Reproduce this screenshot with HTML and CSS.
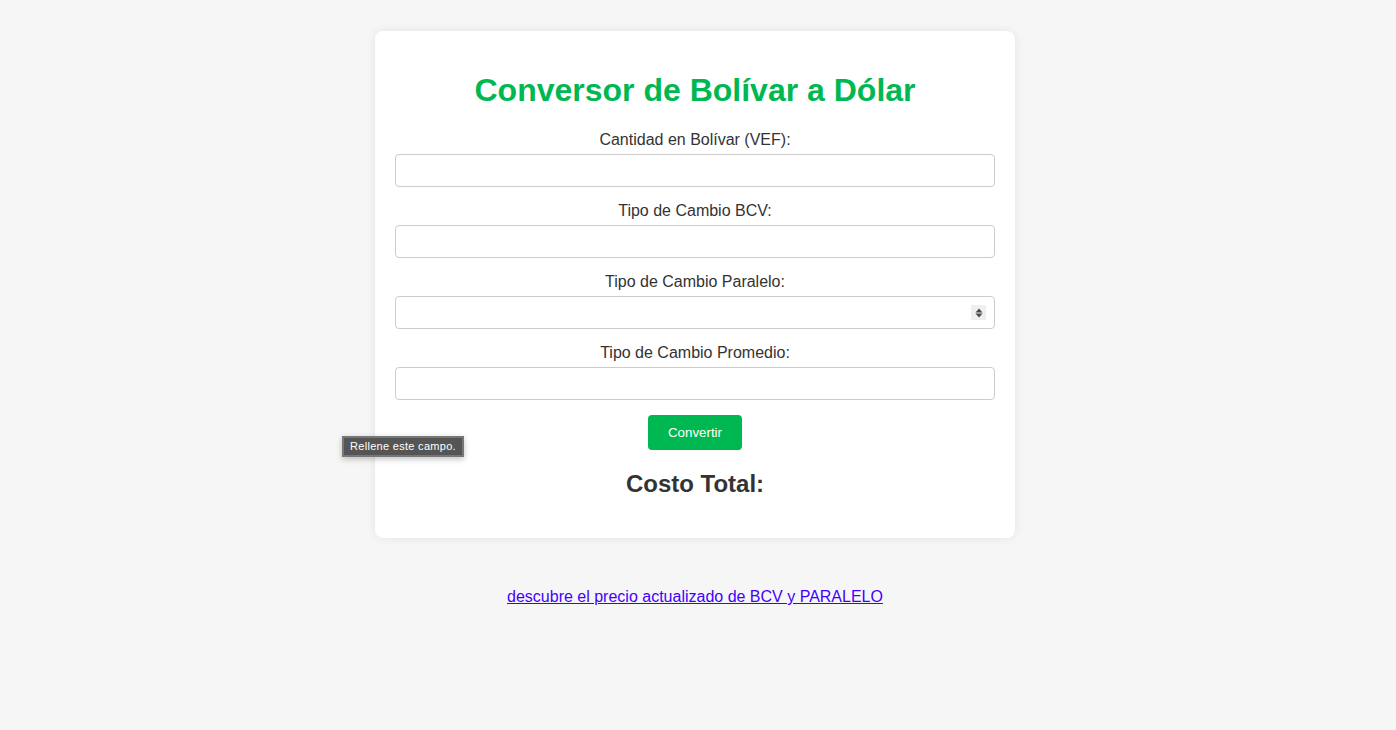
FILE: index.html
```html
<!DOCTYPE html>
<html lang="es">
<head>
<meta charset="utf-8">
<title>Conversor de Bolívar a Dólar</title>
<link rel="stylesheet" href="styles.css">
</head>
<body>
<div class="page">
  <div class="card">
    <h1 class="title">Conversor de Bolívar a Dólar</h1>
    <form class="form">
      <label class="label" for="vef">Cantidad en Bolívar (VEF):</label>
      <input class="field" id="vef" type="text">
      <label class="label" for="bcv">Tipo de Cambio BCV:</label>
      <input class="field" id="bcv" type="text">
      <label class="label" for="par">Tipo de Cambio Paralelo:</label>
      <div class="field-wrap">
        <input class="field" id="par" type="text">
        <span class="spinner"><svg width="14" height="14" viewBox="0 0 14 14"><path d="M7 2.5 L10.5 6.5 H3.5 Z" fill="#4a4a4a"/><path d="M7 11.5 L10.5 7.5 H3.5 Z" fill="#4a4a4a"/></svg></span>
      </div>
      <label class="label" for="prom">Tipo de Cambio Promedio:</label>
      <input class="field" id="prom" type="text">
      <div class="actions">
        <button class="btn" type="button">Convertir</button>
        <span class="tooltip">Rellene este campo.</span>
      </div>
    </form>
    <h2 class="total">Costo Total:</h2>
  </div>
  <p class="linkrow"><a class="link" href="#">descubre el precio actualizado de BCV y PARALELO</a></p>
</div>
</body>
</html>
```
FILE: styles.css
```css
html, body {
  margin: 0;
  padding: 0;
}
body {
  background: #f6f6f6;
  font-family: "Liberation Sans", Arial, sans-serif;
  color: #333;
  font-size: 16px;
}
.page {
  padding-top: 31px;
  padding-right: 6px;
  display: flex;
  flex-direction: column;
  align-items: center;
}
.card {
  width: 600px;
  padding: 20px;
  background: #fff;
  border-radius: 8px;
  box-shadow: 0 0 10px rgba(0,0,0,0.08);
  text-align: center;
}
.title {
  color: #00b852;
  font-size: 32px;
  font-weight: bold;
  margin: 21px 0;
  line-height: 37px;
}
.form {
  display: flex;
  flex-direction: column;
}
.label {
  display: block;
  line-height: 18px;
  padding-top: 1px;
  margin-bottom: 5px;
}
.field {
  display: block;
  box-sizing: border-box;
  width: 600px;
  height: 33px;
  margin: 0 0 14px 0;
  padding: 8px;
  border: 1px solid #ccc;
  border-radius: 4px;
  font-family: "Liberation Sans", Arial, sans-serif;
  font-size: 13.333px;
  background: #fff;
  outline: none;
}
.field-wrap {
  position: relative;
}
.spinner {
  position: absolute;
  right: 9px;
  top: 9px;
  width: 15px;
  height: 15px;
  background: #efefef;
  display: flex;
  align-items: center;
  justify-content: center;
}
.actions {
  position: relative;
  display: flex;
  justify-content: center;
  margin-top: 1px;
}
.btn {
  background: #00b852;
  color: #fff;
  border: none;
  border-radius: 4px;
  padding: 10px 20px;
  height: 35px;
  font-family: "Liberation Sans", Arial, sans-serif;
  font-size: 13.333px;
  cursor: pointer;
}
.tooltip {
  position: absolute;
  left: -53px;
  top: 21px;
  background: #555;
  border: 2px solid #777;
  color: #fff;
  font-size: 11px;
  letter-spacing: 0.3px;
  line-height: 13px;
  padding: 2px 6px;
  white-space: nowrap;
  box-shadow: 0 2px 6px rgba(0,0,0,0.25);
}
.total {
  font-size: 24px;
  font-weight: bold;
  margin: 20px 0;
  line-height: 28px;
  color: #333;
}
.linkrow {
  margin: 50px 0 0 0;
  line-height: 18px;
}
.link {
  color: #4200ff;
  text-decoration: underline;
}
```
